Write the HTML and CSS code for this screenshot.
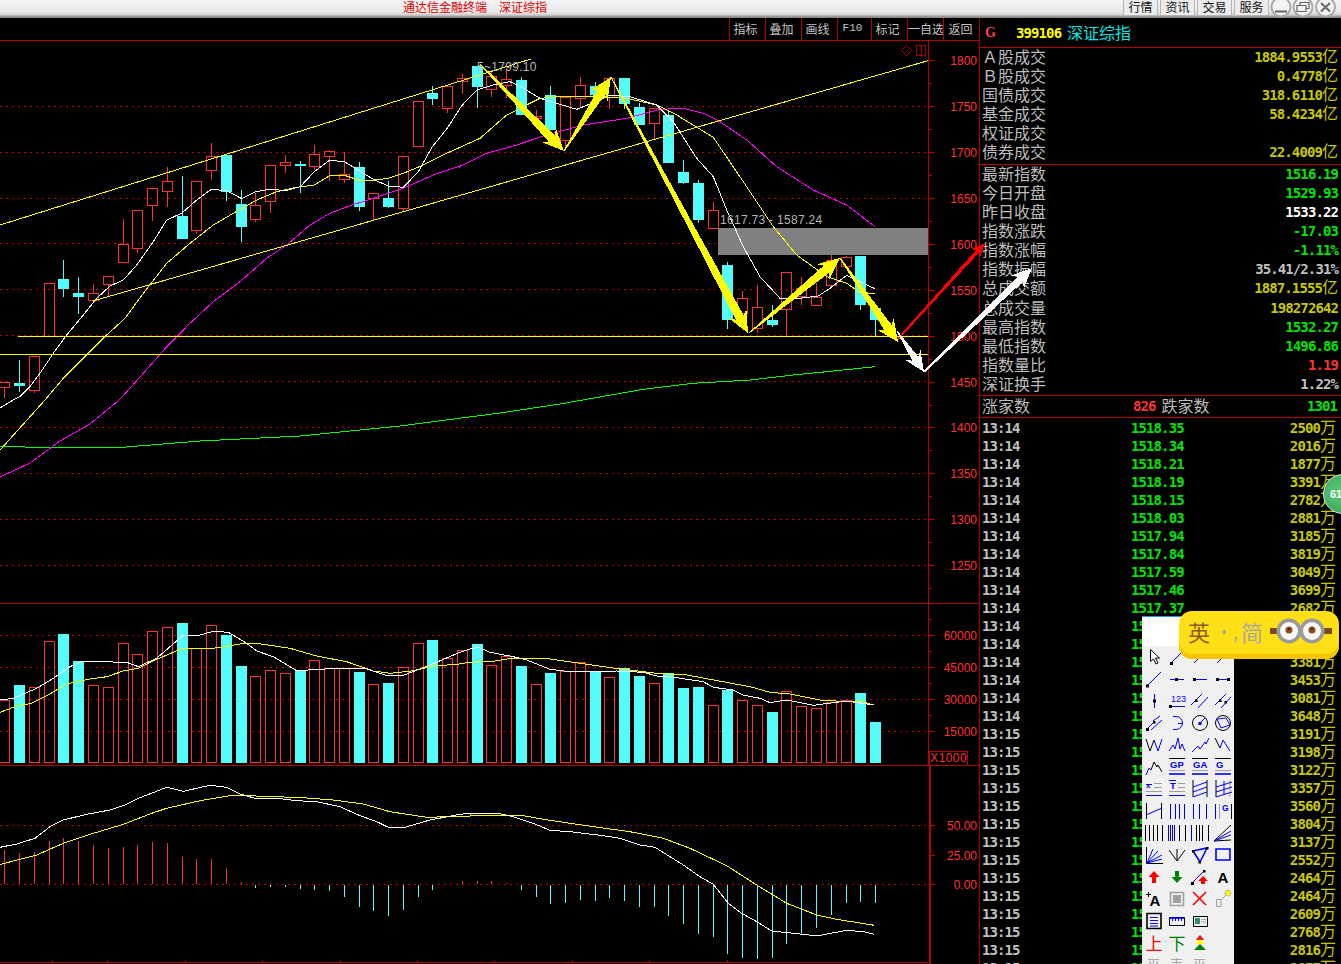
FILE: index.html
```html
<!DOCTYPE html>
<html lang="zh-CN">
<head>
<meta charset="utf-8">
<title>通达信金融终端 深证综指</title>
<link rel="stylesheet" href="styles.css">
</head>
<body>
<div class="app">
  <header class="titlebar">
    <div class="apptitle"><span>通达信金融终端</span><span>深证综指</span></div>
    <nav class="topnav">
      <span class="navbtn">行情</span><span class="navbtn">资讯</span><span class="navbtn">交易</span><span class="navbtn">服务</span>
    </nav>
    <svg class="winctl" viewBox="0 0 68 18" width="68" height="18">
      <g class="ring"><circle cx="11" cy="7" r="9.5"/><circle cx="33" cy="7" r="9.5"/><circle cx="55.500" cy="7" r="9.5"/></g>
      <path class="glyph" d="M5 11.500H17"/>
      <path class="glyph thin" d="M27 5.500H36V11.500H27ZM30 5.500V2.500H39V8.500H36"/>
      <path class="glyph" d="M51 3L60 11.500M60 3L51 11.500"/>
    </svg>
  </header>

  <main class="workspace">
    <section class="chartcol">
      <div class="toolbar">
        <span class="tool">指标</span><span class="tool">叠加</span><span class="tool">画线</span><span class="tool narrow">F10</span><span class="tool">标记</span><span class="tool">一自选</span><span class="tool">返回</span>
      </div>

      <div class="pane pane-price">
        <svg viewBox="0 41 979 562" width="979" height="562">
          <path class="dot" id="gridPrice"/>
          <rect class="zone" x="718" y="228" width="210" height="27"/>
          <path class="wick-up" id="priceUp"/>
          <path class="wick-down" id="priceDown"/>
          <path class="body-down" id="priceDownBody"/>
          <polyline class="ma green" id="maGreen"/>
          <polyline class="ma magenta" id="maMagenta"/>
          <polyline class="ma yellow" id="maYellow"/>
          <polyline class="ma white" id="maWhite"/>
          <path class="ma yellow" d="M0 225L531 59M93 301L928 60.700"/>
          <path class="ma yellow" d="M18 336.500H928M0 354.500H928"/>
          <text class="note" x="477" y="71">5~1799.10</text>
          <text class="note" x="720" y="224">1617.73 - 1587.24</text>
          <path class="marker" d="M906.500 45.500L911.500 50.500L906.500 55.500L901.500 50.500ZM916.500 45.500H925.500V55.500H916.500ZM921 45.500V55.500"/>
          <path class="axis" id="axisPrice"/>
          <text class="ax" x="977" y="65">1800</text>
          <text class="ax" x="977" y="111">1750</text>
          <text class="ax" x="977" y="157">1700</text>
          <text class="ax" x="977" y="203">1650</text>
          <text class="ax" x="977" y="249">1600</text>
          <text class="ax" x="977" y="295">1550</text>
          <text class="ax" x="977" y="341">1500</text>
          <text class="ax" x="977" y="387">1450</text>
          <text class="ax" x="977" y="432">1400</text>
          <text class="ax" x="977" y="478">1350</text>
          <text class="ax" x="977" y="524">1300</text>
          <text class="ax" x="977" y="570">1250</text>
        </svg>
      </div>

      <div class="pane pane-volume">
        <svg viewBox="0 604 979 161" width="979" height="161">
          <path class="dot" d="M0 635.500H928M0 667.500H928M0 699.500H928M0 731.500H928"/>
          <path class="wick-up" id="volUp"/>
          <path class="body-down" id="volDown"/>
          <polyline class="ma yellow" id="volYellow"/>
          <polyline class="ma white" id="volWhite"/>
          <path class="axis" id="axisVol"/>
          <text class="ax" x="977" y="640">60000</text>
          <text class="ax" x="977" y="672">45000</text>
          <text class="ax" x="977" y="704">30000</text>
          <text class="ax" x="977" y="736">15000</text>
          <rect class="axisbox" x="929.500" y="751.500" width="38" height="14"/>
          <text class="ax wide" x="967" y="762">X1000</text>
        </svg>
      </div>

      <div class="pane pane-macd">
        <svg viewBox="0 766 979 198" width="979" height="198">
          <path class="dot" d="M0 825.500H928M0 884.500H928"/>
          <path class="hist-up" id="histUp"/>
          <path class="hist-down" id="histDown"/>
          <polyline class="ma yellow" id="macdYellow"/>
          <polyline class="ma white" id="macdWhite"/>
          <path class="axis heavy" d="M929.500 766V964"/>
          <path class="axis" id="axisMacd"/>
          <text class="ax" x="977" y="830">50.00</text>
          <text class="ax" x="977" y="860">25.00</text>
          <text class="ax" x="977" y="889">0.00</text>
        </svg>
      </div>
    </section>

    <aside class="quote">
      <div class="quotehead"><span class="flag">G</span><span class="code">399106</span><span class="stock">深证综指</span></div>

      <div class="block top">
        <div class="row"><span>Ａ股成交</span><b class="olive">1884.9553<i>亿</i></b></div>
        <div class="row"><span>Ｂ股成交</span><b class="olive">0.4778<i>亿</i></b></div>
        <div class="row"><span>国债成交</span><b class="olive">318.6110<i>亿</i></b></div>
        <div class="row"><span>基金成交</span><b class="olive">58.4234<i>亿</i></b></div>
        <div class="row"><span>权证成交</span></div>
        <div class="row"><span>债券成交</span><b class="olive">22.4009<i>亿</i></b></div>
      </div>

      <div class="block stats">
        <div class="row"><span>最新指数</span><b class="green">1516.19</b></div>
        <div class="row"><span>今日开盘</span><b class="green">1529.93</b></div>
        <div class="row"><span>昨日收盘</span><b class="white">1533.22</b></div>
        <div class="row"><span>指数涨跌</span><b class="green">-17.03</b></div>
        <div class="row"><span>指数涨幅</span><b class="green">-1.11%</b></div>
        <div class="row"><span>指数振幅</span><b class="silver">35.41/2.31%</b></div>
        <div class="row"><span>总成交额</span><b class="olive">1887.1555<i>亿</i></b></div>
        <div class="row"><span>总成交量</span><b class="olive">198272642</b></div>
        <div class="row"><span>最高指数</span><b class="green">1532.27</b></div>
        <div class="row"><span>最低指数</span><b class="green">1496.86</b></div>
        <div class="row"><span>指数量比</span><b class="red">1.19</b></div>
        <div class="row"><span>深证换手</span><b class="silver">1.22%</b></div>
      </div>

      <div class="breadth"><span class="bl">涨家数</span><b class="red">826</b><span class="br">跌家数</span><b class="green push">1301</b></div>

      <div class="ticks">
        <div class="tick"><b class="silver">13:14</b><b class="green">1518.35</b><b class="olive">2500<i>万</i></b></div>
        <div class="tick"><b class="silver">13:14</b><b class="green">1518.34</b><b class="olive">2016<i>万</i></b></div>
        <div class="tick"><b class="silver">13:14</b><b class="green">1518.21</b><b class="olive">1877<i>万</i></b></div>
        <div class="tick"><b class="silver">13:14</b><b class="green">1518.19</b><b class="olive">3391<i>万</i></b></div>
        <div class="tick"><b class="silver">13:14</b><b class="green">1518.15</b><b class="olive">2782<i>万</i></b></div>
        <div class="tick"><b class="silver">13:14</b><b class="green">1518.03</b><b class="olive">2881<i>万</i></b></div>
        <div class="tick"><b class="silver">13:14</b><b class="green">1517.94</b><b class="olive">3185<i>万</i></b></div>
        <div class="tick"><b class="silver">13:14</b><b class="green">1517.84</b><b class="olive">3819<i>万</i></b></div>
        <div class="tick"><b class="silver">13:14</b><b class="green">1517.59</b><b class="olive">3049<i>万</i></b></div>
        <div class="tick"><b class="silver">13:14</b><b class="green">1517.46</b><b class="olive">3699<i>万</i></b></div>
        <div class="tick"><b class="silver">13:14</b><b class="green">1517.37</b><b class="olive">2682<i>万</i></b></div>
        <div class="tick"><b class="silver">13:14</b><b class="green">1517.30</b><b class="olive">3142<i>万</i></b></div>
        <div class="tick"><b class="silver">13:14</b><b class="green">1517.22</b><b class="olive">3276<i>万</i></b></div>
        <div class="tick"><b class="silver">13:14</b><b class="green">1517.11</b><b class="olive">3381<i>万</i></b></div>
        <div class="tick"><b class="silver">13:14</b><b class="green">1517.02</b><b class="olive">3453<i>万</i></b></div>
        <div class="tick"><b class="silver">13:14</b><b class="green">1516.95</b><b class="olive">3081<i>万</i></b></div>
        <div class="tick"><b class="silver">13:14</b><b class="green">1516.88</b><b class="olive">3648<i>万</i></b></div>
        <div class="tick"><b class="silver">13:15</b><b class="green">1516.80</b><b class="olive">3191<i>万</i></b></div>
        <div class="tick"><b class="silver">13:15</b><b class="green">1516.74</b><b class="olive">3198<i>万</i></b></div>
        <div class="tick"><b class="silver">13:15</b><b class="green">1516.69</b><b class="olive">3122<i>万</i></b></div>
        <div class="tick"><b class="silver">13:15</b><b class="green">1516.63</b><b class="olive">3357<i>万</i></b></div>
        <div class="tick"><b class="silver">13:15</b><b class="green">1516.58</b><b class="olive">3560<i>万</i></b></div>
        <div class="tick"><b class="silver">13:15</b><b class="green">1516.52</b><b class="olive">3804<i>万</i></b></div>
        <div class="tick"><b class="silver">13:15</b><b class="green">1516.47</b><b class="olive">3137<i>万</i></b></div>
        <div class="tick"><b class="silver">13:15</b><b class="green">1516.41</b><b class="olive">2552<i>万</i></b></div>
        <div class="tick"><b class="silver">13:15</b><b class="green">1516.36</b><b class="olive">2464<i>万</i></b></div>
        <div class="tick"><b class="silver">13:15</b><b class="green">1516.32</b><b class="olive">2464<i>万</i></b></div>
        <div class="tick"><b class="silver">13:15</b><b class="green">1516.27</b><b class="olive">2609<i>万</i></b></div>
        <div class="tick"><b class="silver">13:15</b><b class="green">1516.23</b><b class="olive">2768<i>万</i></b></div>
        <div class="tick"><b class="silver">13:15</b><b class="green">1516.20</b><b class="olive">2816<i>万</i></b></div>
        <div class="tick"><b class="silver">13:15</b><b class="green">1516.19</b><b class="olive">2857<i>万</i></b></div>
      </div>
    </aside>
  </main>
</div>

<svg class="annotations" width="1341" height="964" viewBox="0 0 1341 964">
  <polygon class="arrow-yellow" id="a1"/>
  <polygon class="arrow-yellow" id="a2"/>
  <polygon class="arrow-yellow" id="a3"/>
  <polygon class="arrow-yellow" id="a4"/>
  <polygon class="arrow-red" id="a6"/>
  <polygon class="arrow-white" id="a7"/>
  <polygon class="arrow-white" id="a8"/>
  <polygon class="arrow-yellow" id="a5"/>
</svg>

<div class="badge"><span>61</span></div>

<div class="drawtools">
  <div class="drawhead"></div>
  <div class="drawgrid">
    <svg class="ic" viewBox="0 0 20 20"><path class="kw" d="M6.500 2.500V14.500L9.500 12L12 17L14 16L11.500 11H15.500Z"/></svg>
    <svg class="ic" viewBox="0 0 20 20"><path class="b" d="M4 16L16 4"/><path class="d" d="M3 15h3v3H3z"/></svg>
    <svg class="ic" viewBox="0 0 20 20"><path class="b" d="M4 16L16 4"/><path class="d" d="M8 9h3v3H8z"/></svg>
    <svg class="ic" viewBox="0 0 20 20"><path class="b" d="M4 16L16 4"/><path class="d" d="M8 9h3v3H8z"/></svg>

    <svg class="ic" viewBox="0 0 20 20"><path class="b" d="M3 17L17 3"/><path class="d" d="M2 15.500h3v3H2z"/></svg>
    <svg class="ic" viewBox="0 0 20 20"><path class="b" d="M3 10.500H17"/><path class="d" d="M8 9h3v3H8z"/></svg>
    <svg class="ic" viewBox="0 0 20 20"><path class="b" d="M4 10.500H17"/><path class="d" d="M3 9h3v3H3z"/></svg>
    <svg class="ic" viewBox="0 0 20 20"><path class="b" d="M4 10.500H16"/><path class="d" d="M3 9h3v3H3zM14 9h3v3h-3z"/></svg>

    <svg class="ic" viewBox="0 0 20 20"><path class="b" d="M10.500 3V17"/><path class="d" d="M9 8.500h3v3H9z"/></svg>
    <svg class="ic" viewBox="0 0 20 20"><text class="t" x="4" y="11" font-size="9">123</text><path class="b" d="M3 15.500H18"/><path class="d" d="M2 14h3v3H2z"/></svg>
    <svg class="ic" viewBox="0 0 20 20"><path class="b" d="M1 14L12 3M8 17L18 6"/><path class="d" d="M5 8.500h2.500v2.500H5z"/></svg>
    <svg class="ic" viewBox="0 0 20 20"><path class="b" d="M2 14L13 3M8 17L18 6"/><path class="d" d="M6 8.500h2.500v2.500H6zM11.500 10h2.500v2.500h-2.500z"/></svg>

    <svg class="ic" viewBox="0 0 20 20"><path class="b" d="M3 16L10 9M9 8L16 3M7 17L18 7"/><path class="d" d="M2 15h3v3H2zM9 8h2.500v2.500H9z"/></svg>
    <svg class="ic" viewBox="0 0 20 20"><path class="b" d="M6 3.500H9A6.500 6.500 0 0 1 9 16.500H6M11 10.500H16"/></svg>
    <svg class="ic" viewBox="0 0 20 20"><circle class="k" cx="10" cy="10" r="7.500"/><path class="b" d="M10 10L15 5"/><path class="bd" d="M8.500 9h3v3h-3z"/></svg>
    <svg class="ic" viewBox="0 0 20 20"><circle class="k" cx="10" cy="10" r="7.500"/><path class="b" d="M4 6L13 5L17 12L8 15Z"/></svg>

    <svg class="ic" viewBox="0 0 20 20"><path class="k" d="M2 4L6 16L10 5"/><path class="b" d="M10 5L14 16L18 4"/></svg>
    <svg class="ic" viewBox="0 0 20 20"><path class="b" d="M2 16L6 10L8 14L11 3L13 14L15 9L18 16"/></svg>
    <svg class="ic" viewBox="0 0 20 20"><path class="b" d="M2 17L8 11L10 14L15 7L16 9L19 3"/></svg>
    <svg class="ic" viewBox="0 0 20 20"><path class="k" d="M2 3L7 13"/><path class="b" d="M7 13L10 5L17 16"/></svg>

    <svg class="ic" viewBox="0 0 20 20"><path class="b" d="M2 18L5 11L7 13"/><path class="k" d="M7 13L10 5L13 10L14 8L18 15"/></svg>
    <svg class="ic" viewBox="0 0 20 20"><path class="k" d="M2 1.500H18"/><text class="t bold" x="3" y="10.500" font-size="9.500">GP</text><path class="g" d="M2 13.500H18"/><path class="b wide" d="M2 17H18"/></svg>
    <svg class="ic" viewBox="0 0 20 20"><path class="k" d="M2 1.500H18"/><text class="t bold" x="3" y="10.500" font-size="9.500">GA</text><path class="g" d="M2 13.500H18"/><path class="b wide" d="M2 17H18"/></svg>
    <svg class="ic" viewBox="0 0 20 20"><path class="k" d="M2 1.500H18"/><text class="t bold" x="3" y="10.500" font-size="9.500">G</text><path class="g" d="M2 13.500H18"/><path class="b wide" d="M2 17H18"/></svg>

    <svg class="ic" viewBox="0 0 20 20"><text class="t bold" x="2" y="9" font-size="8">x</text><path class="g" d="M10 4.500H18M10 8.500H18M2 12.500H18"/><path class="b" d="M2 5.500H8M2 16.500H18"/></svg>
    <svg class="ic" viewBox="0 0 20 20"><text class="t bold" x="3" y="10" font-size="9.500">T</text><path class="g" d="M11 4.500H18M11 8.500H18M2 12.500H18"/><path class="b" d="M2 1.500H9M2 16.500H18"/></svg>
    <svg class="ic" viewBox="0 0 20 20"><path class="k" d="M3 1V18M17 1V18"/><path class="b" d="M3 8L17 3M3 13L17 8M3 18L17 13"/></svg>
    <svg class="ic" viewBox="0 0 20 20"><path class="k" d="M3 1V18"/><path class="g" d="M17 1V18"/><path class="b" d="M3 8L19 3M3 13L19 8M3 18L19 13M11 2V16"/></svg>

    <svg class="ic" viewBox="0 0 20 20"><path class="k" d="M2.500 2V18M17.500 2V18"/><path class="b" d="M2 14L18 7"/></svg>
    <svg class="ic" viewBox="0 0 20 20"><path class="b" d="M3.500 3V18M8.500 3V18M12.500 3V18M17.500 3V18"/></svg>
    <svg class="ic" viewBox="0 0 20 20"><path class="b" d="M3.500 3V18M9.500 3V18M16.500 3V18"/></svg>
    <svg class="ic" viewBox="0 0 20 20"><path class="b" d="M2.500 3V18"/><path class="g" d="M6.500 3V18"/><path class="k" d="M18.500 3V18"/><text class="t bold" x="9" y="10" font-size="8.500">G</text></svg>

    <svg class="ic" viewBox="0 0 20 20"><path class="k" d="M1.500 2V18M5.500 2V18M9.500 2V18M13.500 2V18M18.500 2V18"/></svg>
    <svg class="ic" viewBox="0 0 20 20"><path class="b" d="M1.500 2V18M3.500 2V18M5.500 2V18M7.500 2V18"/><path class="k" d="M12.500 2V18M18.500 2V18"/></svg>
    <svg class="ic" viewBox="0 0 20 20"><path class="b" d="M1.500 2V18"/><path class="k" d="M6.500 2V18M9.500 2V18M12.500 2V18M18.500 2V18"/></svg>
    <svg class="ic" viewBox="0 0 20 20"><path class="k" d="M1 18L18 2M1 18L18 17"/><path class="b" d="M1 18L18 8M1 18L18 12"/></svg>

    <svg class="ic" viewBox="0 0 20 20"><path class="k" d="M2.500 2V18.500H19"/><path class="b" d="M3 18L9 4M3 18L14 6M3 18L18 10M3 18L18 14"/></svg>
    <svg class="ic" viewBox="0 0 20 20"><path class="k" d="M2 5L10 16L18 5M10 4V16"/></svg>
    <svg class="ic" viewBox="0 0 20 20"><path class="b wide" d="M3 6L17 3L10 17Z"/><path class="d" d="M2 5h2.500v2.500H2zM16 2h2.500v2.500H16zM8.500 16H11v2.500H8.500z"/></svg>
    <svg class="ic" viewBox="0 0 20 20"><path class="b wide" d="M3 4H17V15H3Z"/></svg>

    <svg class="ic" viewBox="0 0 20 20"><path class="redfill" d="M10 4L15.500 10H12V16H8V10H4.500Z"/></svg>
    <svg class="ic" viewBox="0 0 20 20"><path class="greenfill" d="M10 16L15.500 10H12V4H8V10H4.500Z"/></svg>
    <svg class="ic" viewBox="0 0 20 20"><path class="b" d="M2 16L14 4"/><path class="d" d="M1 15h3v3H1zM13 3h2.500v2.500H13z"/><path class="redfill" d="M13 9L18 14H15V17H11V14H8Z"/></svg>
    <svg class="ic" viewBox="0 0 20 20"><text class="t big" x="4.500" y="16" font-size="15">A</text></svg>

    <svg class="ic" viewBox="0 0 20 20"><text class="t big" x="5.500" y="17" font-size="15">A</text><path class="k" d="M2 5.500H7M4.500 3V8"/></svg>
    <svg class="ic" viewBox="0 0 20 20"><path class="g wide" d="M3.500 3.500H16.500V16.500H3.500Z"/><path class="grayfill" d="M6 6H14V14H6Z"/></svg>
    <svg class="ic" viewBox="0 0 20 20"><path class="red wide" d="M3 3L16 16M16 3L3 16"/></svg>
    <svg class="ic" viewBox="0 0 20 20"><path class="g" d="M3.500 10.500H8V17.500H3.500ZM8 11L15 4"/><circle class="sun" cx="15" cy="4" r="3"/></svg>

    <svg class="ic" viewBox="0 0 20 20"><path class="k wide" d="M3 2.500H17V17.500H3Z"/><path class="b" d="M6 6.500H14M6 9.500H14M6 12.500H14M6 15H14"/></svg>
    <svg class="ic" viewBox="0 0 20 20"><path class="k" d="M2.500 6.500H17.500V14.500H2.500Z"/><path class="b wide" d="M3 7H17"/><path class="b" d="M5.500 7V10M8.500 7V10M11.500 7V10M14.500 7V10"/></svg>
    <svg class="ic" viewBox="0 0 20 20"><path class="k" d="M3.500 5.500H17.500V15.500H3.500Z"/><path class="pic" d="M5 7H10V13H5Z"/><path class="g" d="M11.500 8.500H16M11.500 11H16"/></svg>
    <span class="ic"></span>

    <svg class="ic" viewBox="0 0 20 20"><text class="glyph-up" x="10" y="17" font-size="17">上</text></svg>
    <svg class="ic" viewBox="0 0 20 20"><text class="glyph-down" x="10" y="17" font-size="17">下</text></svg>
    <svg class="ic" viewBox="0 0 20 20"><path class="redfill" d="M10 2L14 7H6Z"/><path class="sunfill" d="M10 6L14.500 11H5.500Z"/><path class="greenfill" d="M10 11L16 17H4Z"/></svg>
    <span class="ic"></span>

    <span class="ic mute">平</span><span class="ic mute">表</span><span class="ic mute">平</span><span class="ic"></span>
  </div>
</div>

<div class="ime">
  <span class="ime-en">英</span>
  <span class="ime-mark">·,</span>
  <span class="ime-zh">简</span>
  <svg class="goggles" viewBox="0 0 62 30" width="62" height="30">
    <path class="band" d="M0 12H62V18H0Z"/>
    <circle class="frame" cx="19" cy="15" r="12.500"/>
    <circle class="frame" cx="42" cy="15" r="12.500"/>
    <circle class="lens" cx="19" cy="15" r="9"/>
    <circle class="lens" cx="42" cy="15" r="9"/>
    <circle class="iris" cx="19" cy="14" r="3.500"/>
    <circle class="iris" cx="42" cy="14" r="3.500"/>
    <circle class="pupil" cx="19" cy="13" r="1"/>
    <circle class="pupil" cx="42" cy="13" r="1"/>
  </svg>
</div>

<script src="chart.js"></script>
</body>
</html>
```

FILE: styles.css
```css
* { box-sizing: border-box; }
html, body { margin: 0; padding: 0; background: #000; }
body {
  width: 1341px;
  height: 964px;
  overflow: hidden;
  position: relative;
  font-family: "Noto Sans CJK SC", "Liberation Sans", sans-serif;
}
.app { display: flex; flex-direction: column; height: 964px; }

.titlebar {
  display: flex;
  align-items: flex-start;
  flex: 0 0 18px;
  height: 18px;
  overflow: hidden;
  padding-left: 403px;
  background: linear-gradient(#f4f4f4 0, #e8e8e8 12px, #cfcfcf 15px, #8a8a8a 17px);
}
.apptitle { display: flex; gap: 12px; font-size: 12px; line-height: 13px; color: #e00000; }
.topnav { display: flex; gap: 2px; margin-left: auto; margin-right: 1px; }
.navbtn {
  width: 35px;
  height: 16px;
  line-height: 13px;
  text-align: center;
  font-size: 12px;
  color: #111;
  background: #ececec;
  border: 1px solid #b4b4b4;
  border-top: 0;
}
.winctl { flex: 0 0 68px; margin-right: 3px; }
.ring circle { fill: #f2f2f2; stroke: #a9a9a9; stroke-width: 2; }
.glyph { fill: none; stroke: #666; stroke-width: 2; }
.glyph.thin { stroke-width: 1.2; }

.workspace { display: flex; flex: 1; min-height: 0; }

.chartcol { flex: 0 0 980px; border-right: 1px solid #b80000; display: flex; flex-direction: column; }
.toolbar { display: flex; justify-content: flex-end; flex: 0 0 23px; border-bottom: 1px solid #b80000; }
.tool {
  width: 36px;
  height: 22px;
  line-height: 21px;
  padding-right: 4px;
  text-align: center;
  white-space: nowrap;
  font-size: 12px;
  color: #c4c4c4;
  border-left: 1px solid #b80000;
}
.tool:nth-last-child(2) { padding-right: 0; }
.tool:last-child { padding-right: 2px; }
.tool.narrow { width: 34px; font-family: "Liberation Mono", monospace; font-size: 11px; }

.pane svg { display: block; }
.pane-price { flex: 0 0 563px; border-bottom: 1px solid #b80000; }
.pane-volume { flex: 0 0 162px; border-bottom: 1px solid #b80000; }
.pane-macd { flex: 0 0 198px; }

.dot { fill: none; stroke: #b80000; stroke-width: 1; stroke-dasharray: 2 4; shape-rendering: crispEdges; }
.zone { fill: #808080; }
.wick-up { fill: none; stroke: #ff3232; stroke-width: 1; shape-rendering: crispEdges; }
.wick-down { fill: none; stroke: #54fcfc; stroke-width: 1; shape-rendering: crispEdges; }
.body-down { fill: #54fcfc; shape-rendering: crispEdges; }
.ma { fill: none; stroke-width: 1; shape-rendering: crispEdges; }
.ma.white { stroke: #fff; }
.ma.yellow { stroke: #ff0; }
.ma.magenta { stroke: #f0f; }
.ma.green { stroke: #0f0; }
.hist-up { fill: none; stroke: #ff3232; shape-rendering: crispEdges; }
.hist-down { fill: none; stroke: #54fcfc; shape-rendering: crispEdges; }
.axis { fill: none; stroke: #b80000; stroke-width: 1; shape-rendering: crispEdges; }
.axis.heavy { stroke-width: 2; }
.axisbox { fill: none; stroke: #b80000; shape-rendering: crispEdges; }
.marker { fill: none; stroke: #a80000; shape-rendering: crispEdges; }
.note { font: 12px "Liberation Sans", sans-serif; fill: #b8b8b8; letter-spacing: .3px; }
.ax { font: 12px "Liberation Sans", sans-serif; fill: #ff3232; text-anchor: end; }
.ax.wide { letter-spacing: .4px; }

.quote { flex: 1; min-width: 0; overflow: hidden; padding-left: 0; }
.quote b { font: bold 14px/18px "DejaVu Sans Mono", "Liberation Mono", monospace; letter-spacing: -.9px; }
.quote i { font: 16px/0 "Noto Sans CJK SC", sans-serif; letter-spacing: 0; }
.quotehead {
  display: flex;
  align-items: center;
  height: 30px;
  padding: 1px 0 0 5px;
  border-bottom: 1px solid #b80000;
}
.flag { width: 31px; color: #ff4040; font: bold 14px "Liberation Serif", serif; }
.code { color: #ff0; font: bold 14px "DejaVu Sans Mono", monospace; letter-spacing: -.9px; width: 51px; }
.stock { color: #00e8e8; font-size: 16px; margin-bottom: 3px; }
.block { padding: 0 3px 0 2px; border-bottom: 1px solid #b80000; color: #bdbdbd; font-size: 16px; }
.block.top { height: 117px; }
.block.stats { height: 231px; }
.row { display: flex; justify-content: space-between; height: 19.08px; line-height: 19px; }
.row span { line-height: 17px; }
.olive { color: #c8c800; }
.green { color: #00e400; }
.white { color: #fff; }
.silver { color: #c0c0c0; }
.red { color: #ff3232; }
.breadth {
  display: flex;
  align-items: center;
  height: 22px;
  padding: 0 4px 1px 2px;
  border-bottom: 1px solid #b80000;
  font-size: 16px;
  color: #bdbdbd;
}
.bl { width: 151px; margin-bottom: 2px; }
.br { margin-left: 6px; margin-bottom: 2px; }
.push { margin-left: auto; }
.ticks { padding: 1px 5px 0 2px; }
.tick { display: grid; grid-template-columns: 149px 1fr auto; height: 18px; }

.annotations { position: absolute; left: 0; top: 0; pointer-events: none; }
.arrow-yellow { fill: #ff0; shape-rendering: crispEdges; }
.arrow-red { fill: #f00; shape-rendering: crispEdges; }
.arrow-white { fill: #fff; shape-rendering: crispEdges; }

.badge {
  position: absolute;
  left: 1323px;
  top: 474px;
  width: 40px;
  height: 40px;
  padding: 12px 0 0 6px;
  border-radius: 50%;
  border: 1px solid #d8f0d8;
  background: radial-gradient(circle at 40% 45%, #5fc878, #2f9a55);
  color: #fff;
  font: bold 11px/14px "Liberation Sans", sans-serif;
}

.drawtools {
  position: absolute;
  left: 1142px;
  top: 616px;
  width: 92px;
  height: 348px;
  overflow: hidden;
  background: #f0f0f0;
  border-top: 1px solid #2f8fe0;
}
.drawhead { height: 29px; background: #fff; }
.drawgrid { display: grid; grid-template-columns: repeat(4, 23px); grid-auto-rows: 22px; justify-items: center; align-items: center; }
.ic { display: block; width: 20px; height: 20px; }
.ic .b { fill: none; stroke: #00f; }
.ic .k { fill: none; stroke: #000; }
.ic .g { fill: none; stroke: #a0a0a0; }
.ic .red { fill: none; stroke: #f00; }
.ic .wide { stroke-width: 1.6; }
.ic .kw { fill: #fff; stroke: #000; }
.ic .d { fill: #000; }
.ic .bd { fill: #00f; }
.ic .redfill { fill: #f00; }
.ic .greenfill { fill: #008000; }
.ic .sunfill { fill: #ff0; }
.ic .grayfill { fill: #a0a0a0; }
.ic .sun { fill: #ff0; stroke: #c0c080; }
.ic .pic { fill: #2f8f6f; }
.ic .t { fill: #00f; font-family: "Liberation Sans", sans-serif; }
.ic .t.bold { font-weight: bold; }
.ic .t.big { fill: #000; font-weight: bold; }
.glyph-up { fill: #f00; font-family: "Noto Sans CJK SC", sans-serif; text-anchor: middle; }
.glyph-down { fill: #008000; font-family: "Noto Sans CJK SC", sans-serif; text-anchor: middle; }
.ic.mute { color: #a8a8a8; font-size: 14px; line-height: 18px; text-align: center; }

.ime {
  position: absolute;
  left: 1179px;
  top: 611px;
  width: 160px;
  height: 48px;
  display: flex;
  align-items: center;
  padding: 0 7px 9px 9px;
  border-radius: 13px;
  background: #ffe017;
  box-shadow: inset 0 -5px 0 #f6c400;
}
.ime-en { font-size: 22px; color: #8c5c12; width: 30px; }
.ime-mark { font-size: 18px; color: #a9a49a; width: 26px; margin-left: -3px; line-height: 18px; }
.ime-zh { font-size: 22px; color: #a9a9a0; width: 29px; }
.band { fill: #7a4a12; }
.frame { fill: #9a9a9a; }
.lens { fill: #fafafa; }
.iris { fill: #8a4f1a; }
.pupil { fill: #2c1606; }
```

FILE: chart.js
```js
(function () {
  var $ = function (id) { return document.getElementById(id); };

  var X = [4,19,34,49,63,78,93,108,123,137,152,167,182,196,211,226,241,255,270,285,300,314,329,344,359,373,388,403,418,432,447,462,477,491,506,521,536,550,565,580,595,609,624,639,654,668,683,698,713,727,742,757,772,786,801,816,831,846,860,875];

  // direction, body top, body bottom, wick top, wick bottom
  var K = [
    ['u',382,387,382,398],['d',383,386,360,392],['u',356,390,356,393],['u',283,336,283,336],
    ['d',279,289,260,297],['d',293,297,277,314],['u',293,300,284,303],['u',276,284,276,297],
    ['u',244,262,219,263],['u',210,248,210,253],['u',188,205,188,221],['u',181,191,167,207],
    ['d',216,239,176,239],['u',181,230,181,234],['u',156,170,143,180],['d',155,192,155,201],
    ['d',204,227,190,242],['u',205,219,193,222],['u',165,201,165,213],['u',162,165,155,173],
    ['d',164,166,161,193],['u',154,166,145,170],['u',151,156,150,181],['u',174,179,152,183],
    ['d',167,207,162,211],['u',193,198,193,221],['d',198,207,181,208],['u',156,208,156,212],
    ['u',101,146,101,146],['d',93,99,86,105],['u',86,108,86,113],['u',78,81,74,94],
    ['d',66,87,66,108],['u',76,89,70,97],['u',79,85,68,98],['d',80,115,77,115],
    ['u',116,118,110,129],['d',95,130,86,130],['u',97,140,97,149],['u',85,98,77,108],
    ['d',86,95,82,105],['u',78,97,78,109],['d',78,104,78,109],['d',107,125,103,125],
    ['u',108,123,108,139],['d',115,163,111,163],['d',172,183,160,184],['d',183,220,180,223],
    ['u',210,228,202,228],['d',265,320,262,329],['u',298,313,291,322],['u',307,328,285,333],
    ['d',320,325,305,327],['u',272,309,272,335],['u',288,296,277,305],['u',297,305,283,305],
    ['u',260,285,255,285],['u',257,266,256,266],['d',256,305,256,310],['d',308,320,305,337]
  ];

  var up = '', down = '', downBody = '';
  K.forEach(function (k, i) {
    var c = X[i], w = c + 0.5;
    if (k[0] === 'u') {
      up += 'M' + (c - 4.5) + ' ' + (k[1] + 0.5) + 'H' + (c + 5.5) + 'V' + (k[2] + 0.5) + 'H' + (c - 4.5) + 'Z';
      if (k[3] < k[1]) up += 'M' + w + ' ' + k[3] + 'V' + k[1];
      if (k[4] > k[2]) up += 'M' + w + ' ' + k[2] + 'V' + k[4];
    } else {
      downBody += 'M' + (c - 5) + ' ' + k[1] + 'H' + (c + 6) + 'V' + k[2] + 'H' + (c - 5) + 'Z';
      if (k[3] < k[1]) down += 'M' + w + ' ' + k[3] + 'V' + k[1];
      if (k[4] > k[2]) down += 'M' + w + ' ' + k[2] + 'V' + k[4];
    }
  });
  $('priceUp').setAttribute('d', up);
  $('priceDown').setAttribute('d', down);
  $('priceDownBody').setAttribute('d', downBody);

  // flat [zoomX, zoomY ...] samples to page coordinates
  function z(ox, oy, a) {
    var s = [];
    for (var i = 0; i < a.length; i += 2) s.push((ox + a[i] / 3).toFixed(1) + ',' + (oy + a[i + 1] / 3).toFixed(1));
    return s.join(' ');
  }
  function pts(id, str) { $(id).setAttribute('points', str); }

  pts('maWhite', '0,408 ' + z(0, 40, [40,1080,60,1070,90,1040,120,1000,160,940,200,885,250,825,290,775,330,738,370,720,410,675,460,605,500,540,545,520,590,480,634,448,680,452,725,476,766,456,811,447,856,452,901,440,943,395,988,361,1033,365,1078,392,1120,418,1165,438,1210,442,1255,395,1297,320,1342,265,1385,197]) + ' ' +
    z(460, 50, [50,120,100,105,150,95,190,115,240,145,290,160,350,178,400,158,450,135,510,140,590,165,640,215,710,325,760,380,800,480,850,590,900,680,960,745,1020,745,1075,738,1110,715,1160,676,1200,695,1245,716]));
  pts('maYellow', '0,450 ' + z(0, 40, [135,1080,190,1015,260,945,320,885,375,835,430,760,500,670,570,610,640,555,700,520,770,480,830,455,890,442,943,435,988,408,1033,406,1078,421,1120,421,1165,415,1210,400,1270,375,1340,340]) + ' ' +
    z(460, 50, [60,265,140,195,240,145,300,140,400,138,500,145,590,165,650,195,760,262,850,395,940,530,1010,615,1100,680,1160,700,1200,728,1245,730]));
  pts('maMagenta', '0,477 30,463 60,441 90,424 ' + z(0, 40, [358,1080,430,1000,500,920,570,850,640,785,720,725,800,655,860,615,930,555,990,520,1050,497,1120,475,1210,445,1300,405,1380,378]) + ' ' +
    z(460, 50, [0,350,80,310,170,285,250,258,370,225,500,205,600,178,670,175,730,190,780,215,860,270,950,350,1060,420,1160,465,1245,530]));
  pts('maGreen', '0,446.5 50,447.5 120,447.5 200,441 300,436 400,426 500,413 560,404 ' +
    z(460, 50, [550,1018,700,1000,870,990,1000,975,1100,965,1245,950]));

  // dotted price grid and axis ticks
  var grid = '', ticks = 'M928.5 41V603';
  [106,152,198,243,289,335,381,427,473,519,565].forEach(function (y) { grid += 'M0 ' + (y + 0.5) + 'H928'; });
  $('gridPrice').setAttribute('d', grid);
  [60,106,152,198,244,290,336,382,427,473,519,565].forEach(function (y) {
    ticks += 'M929 ' + (y + 0.5) + 'h6M929 ' + (y + 23.5) + 'h3';
  });
  $('axisPrice').setAttribute('d', ticks);

  // volume bars
  var V = [299,255,262,124,102,183,256,262,130,163,94,82,69,145,76,105,198,229,211,220,214,181,205,205,216,253,249,202,130,120,175,151,132,
           195,168,198,253,219,213,187,213,232,204,228,250,219,264,261,316,270,300,316,336,274,319,325,306,300,279,366];
  var vu = '', vd = '';
  V.forEach(function (t, i) {
    var c = X[i], top = Math.round(600 + t / 3);
    if (K[i][0] === 'u') vu += 'M' + (c - 4.5) + ' ' + (top + 0.5) + 'H' + (c + 5.5) + 'V762.5H' + (c - 4.5) + 'Z';
    else vd += 'M' + (c - 5) + ' ' + top + 'H' + (c + 6) + 'V763H' + (c - 5) + 'Z';
  });
  $('volUp').setAttribute('d', vu);
  $('volDown').setAttribute('d', vd);
  pts('volWhite', z(0, 600, [0,300,40,295,110,265,160,235,200,205,245,184,380,187,415,200,470,175,510,140,550,106,590,108,640,94,685,97,740,130,770,153,820,170,890,212,1010,205,1100,207,1160,227,1210,226,1290,195,1380,157]) + ' ' +
    z(470, 600, [0,147,25,142,60,157,130,170,170,180,240,208,300,215,440,213,520,217,560,228,620,233,700,245,730,262,790,270,820,285,870,295,900,308,950,300,1030,316,1090,308,1130,303,1210,315]));
  pts('volYellow', z(0, 600, [0,337,50,318,95,310,145,285,200,252,270,237,320,230,370,213,415,205,470,178,545,146,640,145,720,132,770,130,870,145,950,168,1040,185,1120,213,1170,220,1240,212,1300,198,1370,193]) + ' ' +
    z(470, 600, [0,187,70,184,130,174,220,174,310,187,430,204,560,220,650,225,720,238,840,260,900,277,960,282,1050,300,1130,305,1180,306,1212,315]));
  var vt = 'M928.5 604V765';
  [635,667,699,731].forEach(function (y) { vt += 'M929 ' + (y + 0.5) + 'h6M929 ' + (y - 15.5) + 'h3'; });
  $('axisVol').setAttribute('d', vt);

  // MACD histogram and lines
  var H = [240,249,246,213,205,213,225,234,231,225,216,219,261,267,267,294,336,354,351,351,357,360,363,381,411,423,438,420,381,360,345,333,333,333,340,
           360,381,402,399,390,393,384,393,411,411,438,462,492,501,552,564,567,564,522,492,474,435,399,396,399];
  var hu = '', hd = '';
  H.forEach(function (t, i) {
    var w = X[i] + 0.5, y = Math.round(770 + t / 3);
    if (t < 343) hu += 'M' + w + ' ' + y + 'V884'; else hd += 'M' + w + ' 885V' + y;
  });
  $('histUp').setAttribute('d', hu);
  $('histDown').setAttribute('d', hd);
  pts('macdWhite', z(0, 770, [0,232,50,222,105,205,150,170,190,150,260,133,330,120,370,107,420,83,500,52,550,64,630,46,680,52,720,72,765,85,830,85,890,92,950,95,1020,110,1080,137,1130,155,1165,172,1215,172,1290,150,1380,133]) + ' ' +
    z(470, 770, [0,130,85,130,130,140,190,160,240,181,300,185,400,197,450,205,510,225,555,232,640,285,690,320,730,343,775,400,815,430,860,455,905,483,1000,493,1040,498,1130,481,1180,485,1213,493]));
  pts('macdYellow', z(0, 770, [0,284,50,270,110,255,190,220,280,190,370,163,460,128,500,115,600,92,690,77,740,77,830,80,920,84,1000,90,1090,102,1170,125,1280,142,1410,138]) + ' ' +
    z(470, 770, [0,135,160,137,220,148,370,170,480,185,580,205,660,235,770,287,860,345,950,400,1040,435,1100,448,1213,466]));
  var mt = 'M0 962.5H928';
  [52,107,185,262,340,417,494,572,649,727].forEach(function (x) { mt += 'M' + (x + 0.5) + ' 962V960'; });
  [825,855,884].forEach(function (y) { mt += 'M929 ' + (y + 0.5) + 'h6'; });
  $('axisMacd').setAttribute('d', mt);

  // hand-drawn trend arrows
  function arrow(id, x1, y1, x2, y2, tail, neck, barb, head) {
    var dx = x2 - x1, dy = y2 - y1, L = Math.sqrt(dx * dx + dy * dy), ux = dx / L, uy = dy / L, nx = -uy, ny = ux;
    function p(d, s) { return (x1 + ux * d + nx * s).toFixed(1) + ',' + (y1 + uy * d + ny * s).toFixed(1); }
    $(id).setAttribute('points', [p(0, tail), p(L - head * 0.8, neck), p(L - head, barb), p(L, 0), p(L - head, -barb), p(L - head * 0.8, -neck), p(0, -tail)].join(' '));
  }
  arrow('a1', 480, 64, 564, 151, 0.5, 4.5, 10, 22);
  arrow('a2', 564, 151, 611, 77, 0.5, 4.5, 10, 22);
  arrow('a3', 611, 77, 748, 333, 0.5, 4.5, 10, 22);
  arrow('a4', 749, 333, 840, 258, 0.5, 4.5, 10, 22);
  arrow('a5', 840, 258, 898, 342, 0.5, 4.5, 10, 22);
  arrow('a6', 897, 340, 985, 243, 1, 2, 6, 14);
  arrow('a7', 897, 331, 924, 372, 0.5, 3.5, 9, 20);
  arrow('a8', 924, 372, 1032, 268, 0.8, 3.5, 9, 20);
})();
```
